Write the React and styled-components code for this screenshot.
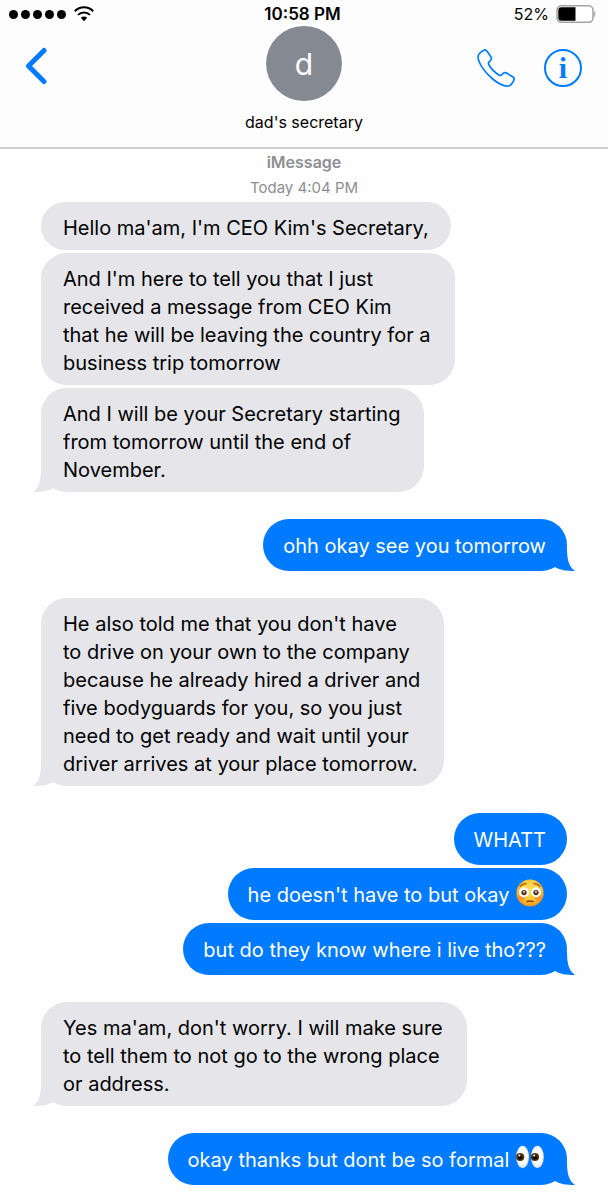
import React from "react"

import styled, { createGlobalStyle } from "styled-components"

const BLUE = "#007aff"
const GREY = "#e5e5ea"

const groups = [
  {
    from: "them",
    messages: [
      { text: "Hello ma'am, I'm CEO Kim's Secretary," },
      {
        text: "And I'm here to tell you that I just\nreceived a message from CEO Kim\nthat he will be leaving the country for a\nbusiness trip tomorrow"
      },
      { text: "And I will be your Secretary starting\nfrom tomorrow until the end of\nNovember." }
    ]
  },
  { from: "me", messages: [{ text: "ohh okay see you tomorrow" }] },
  {
    from: "them",
    messages: [
      {
        text: "He also told me that you don't have\nto drive on your own to the company\nbecause he already hired a driver and\nfive bodyguards for you, so you just\nneed to get ready and wait until your\ndriver arrives at your place tomorrow."
      }
    ]
  },
  {
    from: "me",
    messages: [
      { text: "WHATT" },
      { text: "he doesn't have to but okay ", emoji: "flushed" },
      { text: "but do they know where i live tho???" }
    ]
  },
  {
    from: "them",
    messages: [
      {
        text: "Yes ma'am, don't worry. I will make sure\nto tell them to not go to the wrong place\nor address."
      }
    ]
  },
  { from: "me", messages: [{ text: "okay thanks but dont be so formal ", emoji: "eyes" }] }
]

const WifiIcon = () => (
  <svg width="20" height="16" viewBox="0 0 20 16" role="img" aria-label="Wi-Fi">
    <g fill="none" stroke="#000" strokeWidth="2">
      <path d="M0.8 5.2C6 0 14 0 19.2 5.2" />
      <path d="M4 8.9C7.4 5.6 12.6 5.6 16 8.9" />
    </g>
    <path d="M10 15.2L6.8 11.8C8.6 10.2 11.4 10.2 13.2 11.8Z" />
  </svg>
)

const BatteryIcon = () => (
  <svg width="40" height="18" viewBox="0 0 40 18" role="img" aria-label="Battery">
    <rect x="1" y="0.8" width="36" height="16.4" rx="4.5" fill="#fff" stroke="#a3a3a3" strokeWidth="1.5" />
    <path d="M19.5 2.2V15.8H5.5A3.2 3.2 0 0 1 2.3 12.6V5.4A3.2 3.2 0 0 1 5.5 2.2Z" />
    <path d="M38.2 6C39.8 6.6 39.8 11.4 38.2 12Z" fill="#a3a3a3" />
  </svg>
)

const BackIcon = () => (
  <svg width="24" height="42" viewBox="0 0 24 42" aria-hidden="true">
    <path
      d="M18 3.5L2.5 19L18 34.5"
      fill="none"
      stroke={BLUE}
      strokeWidth="5"
      strokeLinecap="round"
      strokeLinejoin="round"
    />
  </svg>
)

const PhoneIcon = () => (
  <svg width="40" height="40" viewBox="77 145 120 120" aria-hidden="true">
    <path
      d="M102 151C106 149 109 152 112 157L122 172C125 177 124 180 119 184C113 188 113 191 116 196C123 208 134 219 146 226C150 228 153 228 156 224C160 218 165 218 170 221L187 231C192 234 193 238 190 243C186 251 182 258 175 259C164 261 144 252 127 238C105 220 84 191 83 172C83 162 92 156 102 151Z"
      fill="none"
      stroke={BLUE}
      strokeWidth="5"
      strokeLinejoin="round"
    />
  </svg>
)

const FlushedEmoji = () => (
  <EmojiBox viewBox="0 0 28 28" role="img" aria-label="flushed face">
    <defs>
      <radialGradient id="face" cx="50%" cy="38%" r="62%">
        <stop offset="0" stopColor="#ffe45c" />
        <stop offset="0.65" stopColor="#fdc335" />
        <stop offset="1" stopColor="#ee9220" />
      </radialGradient>
    </defs>
    <circle cx="14" cy="14" r="13.6" fill="url(#face)" />
    <ellipse cx="5.5" cy="18.5" rx="4" ry="3" fill="#f4772e" opacity="0.5" />
    <ellipse cx="22.5" cy="18.5" rx="4" ry="3" fill="#f4772e" opacity="0.5" />
    <path d="M4 7.4Q6.5 4.4 10 4.6M18 4.6Q21.5 4.4 24 7.4" fill="none" stroke="#9a5a12" strokeWidth="1.3" strokeLinecap="round" />
    <circle cx="8" cy="13.2" r="5" fill="#fff" />
    <circle cx="20" cy="13.2" r="5" fill="#fff" />
    <circle cx="8" cy="13.6" r="2.7" fill="#5d351a" />
    <circle cx="20" cy="13.6" r="2.7" fill="#5d351a" />
    <circle cx="8" cy="12.8" r="0.9" fill="#fff" />
    <circle cx="20" cy="12.8" r="0.9" fill="#fff" />
    <path d="M11 22.4Q14 21.8 17 22.4" fill="none" stroke="#8c3f12" strokeWidth="1.5" strokeLinecap="round" />
  </EmojiBox>
)

const EyesEmoji = () => (
  <EmojiBox viewBox="0 0 28 28" role="img" aria-label="eyes">
    <defs>
      <radialGradient id="eyeball" cx="50%" cy="45%" r="55%">
        <stop offset="0.6" stopColor="#fff" />
        <stop offset="1" stopColor="#d5d9e0" />
      </radialGradient>
    </defs>
    <ellipse cx="6.6" cy="13" rx="6.4" ry="11.2" fill="url(#eyeball)" />
    <ellipse cx="21.4" cy="13" rx="6.4" ry="11.2" fill="url(#eyeball)" />
    <circle cx="4.2" cy="13" r="4.1" fill="#55320f" />
    <circle cx="19" cy="13" r="4.1" fill="#55320f" />
    <circle cx="4.2" cy="13.4" r="2.2" fill="#120800" />
    <circle cx="19" cy="13.4" r="2.2" fill="#120800" />
    <circle cx="3.4" cy="11.4" r="1" fill="#fff" />
    <circle cx="18.2" cy="11.4" r="1" fill="#fff" />
  </EmojiBox>
)

const emojis = { flushed: FlushedEmoji, eyes: EyesEmoji }

const Message = ({ message, mine, last }) => {
  const Emoji = emojis[message.emoji]
  return (
    <Bubble $mine={mine} $multiline={message.text.includes("\n")}>
      {message.text}
      {Emoji && <Emoji />}
      {last && (
        <Tail $mine={mine} viewBox="0 0 32 24" aria-hidden="true">
          <path d="M24 0C24 11 25 19 32 24C23 24 17 23 12 20L8 12Z" fill={mine ? BLUE : GREY} />
        </Tail>
      )}
    </Bubble>
  )
}

const App = () => (
  <>
    <GlobalStyle />
    <Header>
      <StatusBar>
        <Signal>
          <Dots aria-label="Signal strength">
            {[1, 2, 3, 4, 5].map((n) => (
              <Dot key={n} />
            ))}
          </Dots>
          <WifiIcon />
        </Signal>
        <Clock>10:58 PM</Clock>
        <Battery>
          52%
          <BatteryIcon />
        </Battery>
      </StatusBar>
      <Nav>
        <NavSide>
          <IconButton aria-label="Back">
            <BackIcon />
          </IconButton>
        </NavSide>
        <Contact>
          <Avatar>d</Avatar>
          <Name>dad's secretary</Name>
        </Contact>
        <NavSide $end>
          <IconButton aria-label="Call">
            <PhoneIcon />
          </IconButton>
          <InfoButton aria-label="Info">i</InfoButton>
        </NavSide>
      </Nav>
    </Header>
    <Chat>
      <Stamp>
        <strong>iMessage</strong>
        <span>Today 4:04 PM</span>
      </Stamp>
      {groups.map((group, i) => (
        <Group key={i} $mine={group.from === "me"}>
          {group.messages.map((message, j) => (
            <Message
              key={j}
              message={message}
              mine={group.from === "me"}
              last={j === group.messages.length - 1}
            />
          ))}
        </Group>
      ))}
    </Chat>
  </>
)

export default App

const GlobalStyle = createGlobalStyle`
  * {
    box-sizing: border-box;
  }

  body {
    margin: 0;
    background: #fefefe;
    color: #000;
    font-family: Inter, "Liberation Sans", sans-serif;
  }
`

const Header = styled.header`
  padding-bottom: 13px;
  border-bottom: 2px solid #cfcfd1;
  background: #fdfdfd;
`

const StatusBar = styled.div`
  display: grid;
  grid-template-columns: 1fr auto 1fr;
  align-items: center;
  height: 26px;
  padding: 2px 12px 0 9px;
  font-size: 16px;
  line-height: 24px;
`

const Signal = styled.div`
  display: flex;
  align-items: center;
  gap: 8px;
`

const Dots = styled.div`
  display: flex;
  gap: 3px;
`

const Dot = styled.span`
  width: 9px;
  height: 9px;
  border-radius: 50%;
  background: #000;
`

const Clock = styled.time`
  font-size: 17px;
  font-weight: 600;
`

const Battery = styled.div`
  display: flex;
  align-items: center;
  justify-content: flex-end;
  gap: 7px;
`

const Nav = styled.nav`
  display: grid;
  grid-template-columns: 1fr auto 1fr;
  align-items: start;
  padding: 0 26px;
`

const NavSide = styled.div`
  display: flex;
  align-items: center;
  justify-content: ${({ $end }) => ($end ? "flex-end" : "flex-start")};
  gap: 28px;
  height: 84px;
`

const IconButton = styled.button`
  display: flex;
  padding: 0;
  border: 0;
  background: none;
  cursor: pointer;
`

const InfoButton = styled.button`
  width: 38px;
  height: 38px;
  padding: 0;
  border: 2px solid ${BLUE};
  border-radius: 50%;
  background: none;
  color: ${BLUE};
  font: bold 30px/32px "Liberation Serif", serif;
  cursor: pointer;
`

const Contact = styled.div`
  display: flex;
  flex-direction: column;
  align-items: center;
  gap: 9px;
`

const Avatar = styled.div`
  display: flex;
  align-items: center;
  justify-content: center;
  width: 76px;
  height: 75px;
  border-radius: 50%;
  background: #858992;
  color: #fff;
  font-size: 30px;
`

const Name = styled.div`
  font-size: 16px;
  line-height: 24px;
`

const Chat = styled.main`
  padding: 0 41px 15px;
`

const Stamp = styled.div`
  display: flex;
  flex-direction: column;
  align-items: center;
  margin-bottom: 1px;
  color: #8e8e93;
  font-size: 15px;
  line-height: 26px;

  strong {
    font-size: 16px;
    font-weight: 600;
  }
`

const Group = styled.section`
  display: flex;
  flex-direction: column;
  align-items: ${({ $mine }) => ($mine ? "flex-end" : "flex-start")};
  gap: 3px;

  & + & {
    margin-top: 27px;
  }
`

const Bubble = styled.div`
  position: relative;
  padding: ${({ $mine, $multiline }) =>
    $mine ? "13px 21px 11px 20px" : $multiline ? "12px 24px 8px 22px" : "12px 22px 8px 22px"};
  border-radius: 26px;
  background: ${({ $mine }) => ($mine ? BLUE : GREY)};
  color: ${({ $mine }) => ($mine ? "#fff" : "#000")};
  font-size: 20px;
  line-height: 28px;
  white-space: pre-wrap;
`

const EmojiBox = styled.svg`
  width: 28px;
  height: 28px;
  margin: -8px 2px 0 1px;
  vertical-align: middle;
`

const Tail = styled.svg`
  position: absolute;
  bottom: 0;
  width: 32px;
  height: 24px;
  ${({ $mine }) => ($mine ? "right: -8px;" : "left: -8px; transform: scaleX(-1);")}
`
